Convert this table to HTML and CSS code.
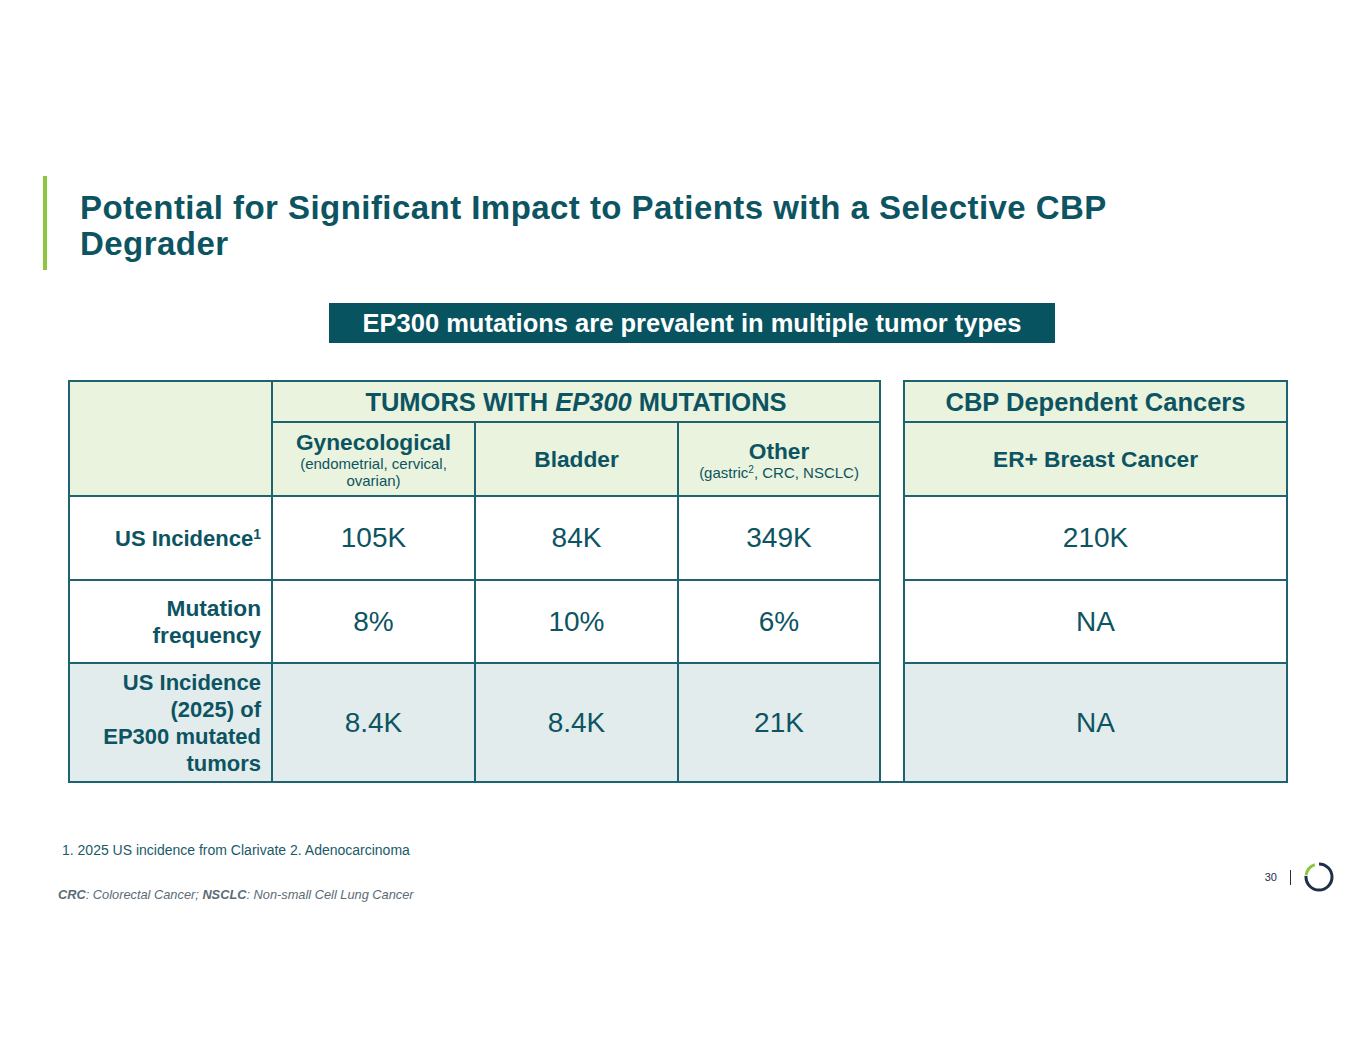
FILE: index.html
```html
<!DOCTYPE html>
<html lang="en">
<head>
<meta charset="utf-8">
<title>Potential for Significant Impact</title>
<link rel="stylesheet" href="styles.css">
</head>
<body>
<div class="slide">
  <div class="title-block">
    <h1 class="title">Potential for Significant Impact to Patients with a Selective CBP<br>Degrader</h1>
  </div>

  <div class="banner">EP300 mutations are prevalent in multiple tumor types</div>

  <table class="data">
    <colgroup>
      <col class="c-label">
      <col class="c-val">
      <col class="c-val">
      <col class="c-val3">
      <col class="c-gap">
      <col class="c-cbp">
    </colgroup>
    <tr class="h1">
      <td class="hd corner" rowspan="2"></td>
      <td class="hd group" colspan="3">TUMORS WITH <em>EP300</em> MUTATIONS</td>
      <td class="gap" rowspan="5"></td>
      <td class="hd group narrow">CBP Dependent Cancers</td>
    </tr>
    <tr class="h2">
      <td class="hd sub"><span class="sub-main">Gynecological</span><span class="sub-note">(endometrial, cervical, ovarian)</span></td>
      <td class="hd sub"><span class="sub-main">Bladder</span></td>
      <td class="hd sub narrow"><span class="sub-main">Other</span><span class="sub-note">(gastric<sup>2</sup>, CRC, NSCLC)</span></td>
      <td class="hd sub narrow"><span class="sub-main">ER+ Breast Cancer</span></td>
    </tr>
    <tr class="r1">
      <th class="label">US Incidence<sup>1</sup></th>
      <td class="val">105K</td>
      <td class="val">84K</td>
      <td class="val">349K</td>
      <td class="val">210K</td>
    </tr>
    <tr class="r2">
      <th class="label narrow">Mutation<br>frequency</th>
      <td class="val">8%</td>
      <td class="val">10%</td>
      <td class="val">6%</td>
      <td class="val">NA</td>
    </tr>
    <tr class="r3">
      <th class="label">US Incidence<br>(2025) of<br>EP300 mutated<br>tumors</th>
      <td class="val">8.4K</td>
      <td class="val">8.4K</td>
      <td class="val">21K</td>
      <td class="val">NA</td>
    </tr>
  </table>

  <div class="footer">
    <div class="notes">
      <p class="fn">1. 2025 US incidence from Clarivate 2. Adenocarcinoma</p>
      <p class="abbr"><b>CRC</b>: Colorectal Cancer; <b>NSCLC</b>: Non-small Cell Lung Cancer</p>
    </div>
    <div class="pager">
      <span class="pnum">30</span>
      <span class="sep"></span>
      <svg class="logo" width="32" height="32" viewBox="0 0 32 32">
        <circle cx="16" cy="16" r="13" fill="none" stroke="#1d2f49" stroke-width="3" stroke-dasharray="62 100" transform="rotate(-90 16 16)"/>
        <circle cx="16" cy="16" r="13" fill="none" stroke="#8cc63f" stroke-width="3" stroke-dasharray="14 100" transform="rotate(189 16 16)"/>
      </svg>
    </div>
  </div>
</div>
</body>
</html>
```

FILE: styles.css
```css
html, body {
  margin: 0;
  padding: 0;
  background: #ffffff;
}

body {
  font-family: "Liberation Sans", Arial, sans-serif;
  color: #0d5462;
}

.slide {
  width: 1365px;
  height: 1055px;
  padding-top: 176px;
  box-sizing: border-box;
}

.title-block {
  margin-left: 43px;
  border-left: 4px solid #8cc63f;
  height: 94px;
  box-sizing: border-box;
  padding: 14px 0 0 33px;
}

.title {
  margin: 0;
  font-size: 33px;
  line-height: 36px;
  letter-spacing: 0.45px;
  font-weight: 700;
  color: #0d5462;
}

.banner {
  margin: 33px 0 0 329px;
  width: 726px;
  height: 40px;
  line-height: 41px;
  background: #07535f;
  color: #ffffff;
  text-align: center;
  font-family: "Liberation Sans Narrow", "Liberation Sans", sans-serif;
  font-weight: 700;
  font-size: 25.5px;
}

.narrow {
  font-family: "Liberation Sans Narrow", "Liberation Sans", sans-serif;
}

.data {
  margin: 37px 0 0 68px;
  width: 1218px;
  border-collapse: collapse;
  table-layout: fixed;
}

.c-label { width: 203px; }
.c-val { width: 203px; }
.c-val3 { width: 202px; }
.c-gap { width: 24px; }
.c-cbp { width: 383px; }

.data td, .data th {
  border: 2px solid #1e6470;
  padding: 0;
  text-align: center;
  vertical-align: middle;
  color: #0d5462;
}

.data .gap {
  border-top: none;
  background: #ffffff;
}

.hd {
  background: #e9f3de;
  font-weight: 700;
}

.h1 { height: 41px; }
.h2 { height: 74px; }
.r1 { height: 84px; }
.r2 { height: 83px; }
.r3 { height: 119px; }

.group {
  font-size: 25.5px;
  line-height: 28px;
}

.group em {
  font-style: italic;
}

.sub-main {
  display: block;
  font-size: 22.7px;
  line-height: 26px;
}

.sub-note {
  display: block;
  font-size: 15px;
  line-height: 17px;
  font-weight: 400;
  padding: 0 18px;
}

.sub-note sup {
  font-size: 10px;
  line-height: 0;
  vertical-align: 5px;
}

.data th.label {
  text-align: right;
  padding-right: 10px;
  font-size: 22px;
  line-height: 27px;
  font-weight: 700;
}

.data th.label.narrow {
  font-size: 22.7px;
}

.label sup {
  font-size: 14px;
  line-height: 0;
  vertical-align: 7px;
}

.val {
  font-size: 28px;
  font-weight: 400;
}

.r3 td, .r3 th {
  background: #e3ecec;
}

.data .r3 .gap { background: #ffffff; }

.footer {
  display: flex;
  justify-content: space-between;
  margin-top: 59px;
  padding-right: 30px;
}

.notes {
  padding-left: 58px;
}

.fn {
  margin: 0 0 0 4px;
  font-size: 14px;
  line-height: 16px;
  color: #1a5a68;
}

.abbr {
  margin: 29px 0 0 0;
  font-size: 12.8px;
  line-height: 16px;
  font-style: italic;
  color: #5b6b76;
}

.abbr b {
  font-weight: 700;
}

.pager {
  display: flex;
  align-items: center;
  padding-top: 9px;
}

.pnum {
  font-size: 11px;
  color: #1d2f49;
}

.sep {
  display: inline-block;
  width: 1px;
  height: 15px;
  background: #1d2f49;
  margin: 0 12px 0 13px;
}

.logo {
  display: block;
}
```
